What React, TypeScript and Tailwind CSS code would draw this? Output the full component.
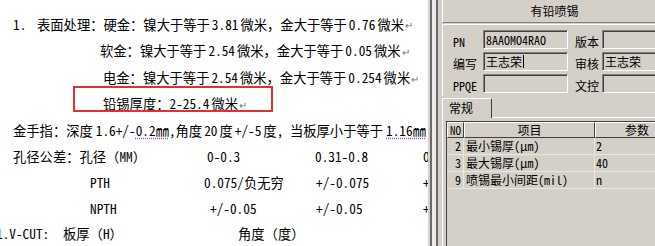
import React from "react";

const FONT = "font-['Noto_Sans_CJK_SC',sans-serif]";

function Ret() {
  return <span className="text-[#7a7a7a] text-[10px] ml-[1px]">↵</span>;
}

function L({ children, g }: { children: React.ReactNode; g?: boolean }) {
  return (
    <span className={g ? "[font-feature-settings:'hwid'] whitespace-pre mx-[2px]" : "[font-feature-settings:'hwid'] whitespace-pre"}>
      {children}
    </span>
  );
}

const UL = "underline decoration-dotted decoration-[#8a5cd6] underline-offset-2";

function Doc() {
  return (
    <div className={`relative w-[428px] h-[246px] shrink-0 bg-white overflow-hidden whitespace-nowrap text-[13.3px] leading-[25.8px] pt-3 text-black ${FONT}`}>
      <div className="flex">
        <span className="w-[37px] pl-[13px] shrink-0"><L>1.</L></span>
        <span>
          表面处理：硬金：镍大于等于<L g>3.81</L>微米，金大于等于<L g>0.76</L>微米
        </span>
        <Ret />
      </div>
      <div className="pl-[100px]">
        软金：镍大于等于<L g>2.54</L>微米，金大于等于<L g>0.05</L>微米<Ret />
      </div>
      <div className="pl-[103px]">
        电金：镍大于等于<L g>2.54</L>微米，金大于等于<L g>0.254</L>微米<Ret />
      </div>
      <div className="pl-[103px]">
        铅锡厚度：<L>2-25.4</L><span className="ml-[2px]">微米</span><Ret />
      </div>
      <div className="pl-[13px]">
        金手指：深度<span className="ml-[3px]"><L>1.6+/-</L></span>
        <span className={UL}>
          <L>0.2</L>㎜
        </span>
        <L>,</L>角度<L g>20</L>度<L g>+/-5</L>度<L>, </L>当板厚小于等于<span className="ml-[3px]" />
        <span className={UL}>
          <L>1.16</L>㎜
        </span>
      </div>
      <div className="flex">
        <span className="w-[207px] pl-[13px] shrink-0">孔径公差：孔径（<L>MM</L>）</span>
        <span className="w-[108px] shrink-0"><L>0-0.3</L></span>
        <span className="w-[108px] shrink-0"><L>0.31-0.8</L></span>
        <span className="shrink-0"><L>0.8</L></span>
      </div>
      <div className="flex">
        <span className="w-[204px] pl-[90px] shrink-0"><L>PTH</L></span>
        <span className="w-[112px] shrink-0"><L>0.075/</L>负无穷</span>
        <span className="w-[107px] shrink-0"><L>+/-0.075</L></span>
        <span className="shrink-0"><L>+</L></span>
      </div>
      <div className="flex">
        <span className="w-[210px] pl-[90px] shrink-0"><L>NPTH</L></span>
        <span className="w-[106px] shrink-0"><L>+/-0.05</L></span>
        <span className="w-[107px] shrink-0"><L>+/-0.05</L></span>
        <span className="shrink-0"><L>+</L></span>
      </div>
      <div className="flex ml-[-4px]">
        <span className="w-[67px] shrink-0"><L>1.V-CUT:</L></span>
        <span className="w-[175px] shrink-0">板厚（<L>H</L>）</span>
        <span className="shrink-0">角度（度）</span>
      </div>
      <div className="absolute left-[73px] top-[86px] w-[200px] h-[26px] border-2 border-[#e0312f]" />
    </div>
  );
}

function Splitter() {
  return (
    <div className="flex h-[246px] shrink-0">
      <div className="w-[2px] bg-[#d4d0c8]" />
      <div className="w-[2px] bg-[#6a6a6a]" />
      <div className="w-[4px] bg-[#ecebe8]" />
      <div className="w-[2px] bg-[#6a6a6a]" />
      <div className="w-[2px] bg-[#d4d0c8]" />
    </div>
  );
}

function Box({ text, cursor }: { text?: string; cursor?: boolean }) {
  return (
    <div className="h-[19px] bg-[#d4d0c8] border-t border-l border-[#808080] border-b border-r border-b-white border-r-white shadow-[inset_1px_1px_0_#404040] pl-[2px] flex items-center text-[12px] leading-none text-black overflow-hidden whitespace-nowrap">
      {text}
      {cursor && <span className="inline-block w-[1px] h-[13px] bg-black ml-[1px]" />}
    </div>
  );
}

function FormRow({ l1, t1, l2, t2, cursor }: { l1: string; t1?: string; l2: string; t2?: string; cursor?: boolean }) {
  return (
    <div className="flex items-end">
      <span className="w-[30px] shrink-0 text-[12px] leading-none pb-[1px]">{l1}</span>
      <div className="w-[85px] shrink-0">
        <Box text={t1} cursor={cursor} />
      </div>
      <span className="w-[34px] shrink-0 pl-[7px] text-[12px] leading-none pb-[1px]">{l2}</span>
      <div className="w-[70px] shrink-0">
        <Box text={t2} />
      </div>
    </div>
  );
}

const rows = [
  { no: "2", item: "最小锡厚(μm)", val: "2" },
  { no: "3", item: "最大锡厚(μm)", val: "40" },
  { no: "9", item: "喷锡最小间距(mil)", val: "n" },
];

function Panel() {
  return (
    <div className={`w-[217px] h-[246px] shrink-0 bg-[#d4d0c8] overflow-hidden text-black [font-feature-settings:'hwid'] ${FONT}`}>
      <div className="w-[230px] pl-[2px] flex flex-col h-full">
        <div className="h-[23px] border-l border-white border-b border-b-[#808080] flex items-center justify-center text-[12px] pr-[4px]">
          有铅喷锡
        </div>
        <div className="h-[72px] border-t border-white border-l border-l-white mt-[1px] pl-[10px] pt-[5px] flex flex-col gap-[3px]">
          <FormRow l1="PN" t1="8AAOMO4RAO" l2="版本" />
          <FormRow l1="编写" t1="王志荣" cursor l2="审核" t2="王志荣" />
          <FormRow l1="PPQE" l2="文控" />
        </div>
        <div className="flex h-[22px] items-end">
          <div className="w-[50px] h-[20px] border-t border-l border-white border-r border-r-[#404040] pl-[6px] text-[12px] leading-[18px]">
            常规
          </div>
          <div className="flex-1 h-[1px] bg-white" />
        </div>
        <div className="flex-1 border-l border-white pl-[3px] pt-[3px]">
          <div className="h-full border-l border-t border-[#404040] text-[12px]">
            <div className="flex h-[16px]">
              <div className="w-[17px] shrink-0 border-t border-l border-white border-r border-b border-r-[#404040] border-b-[#404040] flex items-center justify-center text-[11px] leading-none">
                NO
              </div>
              <div className="w-[131px] shrink-0 border-t border-l border-white border-r border-b border-r-[#404040] border-b-[#404040] flex items-center justify-center leading-none">
                项目
              </div>
              <div className="w-[84px] shrink-0 border-t border-l border-white border-r border-b border-r-[#404040] border-b-[#404040] flex items-center justify-center leading-none">
                参数
              </div>
            </div>
            {rows.map((r) => (
              <div key={r.no} className="flex h-[17px]">
                <div className="w-[17px] shrink-0 border-r border-b border-[#e9e7e2] flex items-center justify-end pr-[2px] leading-none">
                  {r.no}
                </div>
                <div className="w-[131px] shrink-0 border-r border-b border-[#e9e7e2] flex items-center pl-[2px] leading-none whitespace-nowrap">
                  {r.item}
                </div>
                <div className="w-[84px] shrink-0 border-r border-b border-[#e9e7e2] flex items-center pl-[1px] leading-none">
                  {r.val}
                </div>
              </div>
            ))}
          </div>
        </div>
      </div>
    </div>
  );
}

export default function App() {
  return (
    <div className="flex w-[655px] h-[246px] overflow-hidden bg-white">
      <Doc />
      <Splitter />
      <Panel />
    </div>
  );
}
